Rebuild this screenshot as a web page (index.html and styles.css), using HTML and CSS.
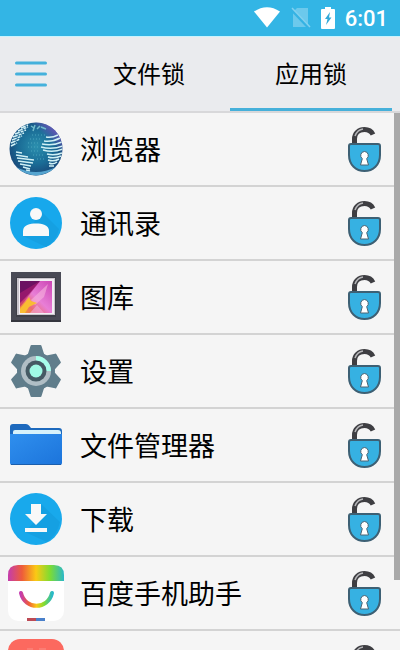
FILE: index.html
```html
<!DOCTYPE html>
<html lang="zh-CN">
<head>
  <meta charset="UTF-8" />
  <meta name="viewport" content="width=device-width, initial-scale=1" />
  <title>应用锁</title>
  <link rel="stylesheet" href="styles.css">
</head>
<body>
  <svg class="defs" aria-hidden="true">
    <symbol id="lock" viewBox="0 0 36 48">
      <path d="M8.500 19V14C8.500 8 13 4.500 18.500 4.500C22.500 4.500 25.500 6.500 27 9.500" fill="none" stroke="#3e3e42" stroke-width="5" />
      <path d="M9 11C10.500 7 13.500 4.500 17 4" fill="none" stroke="#b5b5b8" stroke-width="1.500" />
      <path d="M5 19H32Q34 19 34 21V30C34 40 27 46 18.500 46S3 40 3 30V21Q3 19 5 19Z" fill="#36b1e2" stroke="#3d6074" stroke-width="2" />
      <path d="M18.500 26.500a4 4 0 0 1 2.200 7.200L22.500 40H14.500L16.300 33.700A4 4 0 0 1 18.500 26.500Z" fill="#fff" stroke="#4b6474" />
    </symbol>
  </svg>

  <div class="status">
    <svg width="28" height="22" viewBox="0 0 28 22"><path d="M1 4.500Q14-4 27 4.500L14 20.500Z" fill="#fff" /></svg>
    <svg width="20" height="22" viewBox="0 0 20 22">
      <path d="M6 1H17V20H2V5Z" fill="#6cc9ec" />
      <path d="M0 2L18 21" stroke="#35b3e4" stroke-width="3" />
      <path d="M1 1L19 20" stroke="#82d1ef" stroke-width="1.500" />
    </svg>
    <svg width="14" height="22" viewBox="0 0 14 22">
      <path d="M4 0H10V2H13Q14 2 14 3V21Q14 22 13 22H1Q0 22 0 21V3Q0 2 1 2H4Z" fill="#fff" />
      <path d="M9 5L4 12H6.500L5 18L10.500 10.500H8Z" fill="#33a9d8" />
    </svg>
    <span class="time">6:01</span>
  </div>

  <header class="header">
    <button class="menu" aria-label="菜单">
      <svg width="34" height="28" viewBox="0 0 34 28"><path d="M2.500 3H31.500M2.500 14H31.500M2.500 25H31.500" stroke="#45b1dc" stroke-width="3" stroke-linecap="round" /></svg>
    </button>
    <button class="tab">文件锁</button>
    <button class="tab active">应用锁</button>
  </header>

  <main class="content">
    <ul class="list">
      <li class="row">
        <svg class="icon" viewBox="0 0 56 56">
          <defs>
            <radialGradient id="globe" cx=".5" cy=".45" r=".55">
              <stop offset="0" stop-color="#2b8fae" /><stop offset=".6" stop-color="#1a6c96" /><stop offset="1" stop-color="#194879" />
            </radialGradient>
            <linearGradient id="glow" x1=".5" y1=".5" x2=".9" y2=".1">
              <stop offset=".5" stop-color="#7658c4" stop-opacity="0" /><stop offset="1" stop-color="#7658c4" />
            </linearGradient>
            <clipPath id="ball"><circle cx="28" cy="28" r="26.500" /></clipPath>
          </defs>
          <circle cx="28" cy="28" r="26.500" fill="url(#globe)" />
          <circle cx="28" cy="28" r="26.500" fill="url(#glow)" />
          <g clip-path="url(#ball)" fill="none" stroke="#d0f0f5" stroke-width="1.500">
            <path d="M13 7L20 4M10 10L20 6M7 13L18 9M5 16L16 12M4 19L14 15M3 22L12 18M3 25L9 22" stroke-dasharray="5 1 3 1" />
            <path d="M8 31L14 32M8 34L20 36M9 37L26 39M10 40L25 42M12 43L23 45M15 46L22 48M18 49L22 50" />
            <path d="M38 16Q44 17 50 14M36 20Q45 21 52 17M34 23Q45 25 54 21M33 26Q44 29 55 25M35 29Q45 32 55 28M39 33Q46 35 54 32M40 36Q46 38 53 35M40 39Q46 41 51 38M41 42Q45 44 49 41M41 45L46 45" />
            <path d="M23 5L26 7M27 4L25 10M29 8L32 5M33 6L38 8" stroke="#71bacb" />
          </g>
          <path d="M24 14H37M22 18H34M20 22H31M20 26H30M23 30H31M25 34H36M29 38H37" stroke="#4ba4bd" stroke-dasharray="1 2" />
          <path d="M8 46Q28 56 48 46Q39 54 28 54.500Q17 54 8 46Z" fill="#55a4cf" />
        </svg>
        <span class="name">浏览器</span>
        <button class="lock" aria-label="锁定浏览器"><svg width="36" height="48"><use href="#lock" /></svg></button>
      </li>
      <li class="row">
        <svg class="icon" viewBox="0 0 56 56">
          <circle cx="28" cy="28" r="26" fill="#17a8ec" />
          <path d="M32 15L51 34Q48 47 38 52L15 41L27 26Z" fill="#15a0e2" />
          <circle cx="28" cy="19" r="6" fill="#f8f8f8" />
          <path d="M15 41V36C15 30 22 28.500 28 28.500S41 30 41 36V41Z" fill="#f8f8f8" />
        </svg>
        <span class="name">通讯录</span>
        <button class="lock" aria-label="锁定通讯录"><svg width="36" height="48"><use href="#lock" /></svg></button>
      </li>
      <li class="row">
        <svg class="icon" viewBox="0 0 56 56">
          <defs>
            <linearGradient id="photo" x1="0" y1="1" x2="1" y2="0">
              <stop offset="0" stop-color="#f4a31d" /><stop offset=".25" stop-color="#ec6c70" /><stop offset=".5" stop-color="#e87fd6" /><stop offset="1" stop-color="#cc45b5" />
            </linearGradient>
          </defs>
          <path d="M3 3H53V53H3Z" fill="#494a55" />
          <path d="M3 51H53V53H3Z" fill="#35363e" />
          <path d="M8 8H48V48H8Z" fill="#3e3f48" />
          <path d="M9 9H47V46H9Z" fill="#c9c5cc" />
          <path d="M11 10H46V45H11Z" fill="#f2eef3" />
          <path d="M12 12H44V44H12Z" fill="url(#photo)" />
          <path d="M12 12H32L21 25L12 34Z" fill="#6c1262" />
          <path d="M12 24L32 12L22 25L12 38Z" fill="#b01c73" opacity=".6" />
          <path d="M23 31L40 15L36 28L27 36Z" fill="#f7b4dd" opacity=".6" />
          <path d="M12 40L21 28L23 32L29 34L21 38L17 44H12Z" fill="#f9bc32" />
          <path d="M22 44L29 36L36 44Z" fill="#f0aadd" opacity=".6" />
        </svg>
        <span class="name">图库</span>
        <button class="lock" aria-label="锁定图库"><svg width="36" height="48"><use href="#lock" /></svg></button>
      </li>
      <li class="row">
        <svg class="icon" viewBox="0 0 56 56">
          <g fill="#607d8b" stroke="#607d8b" stroke-width="2" stroke-linejoin="round">
            <circle cx="28" cy="28" r="18" />
            <path id="tooth" d="M20 14L23.500 3H32.500L36 14V42L32.500 53H23.500L20 42Z" />
            <use href="#tooth" transform="rotate(60 28 28)" />
            <use href="#tooth" transform="rotate(120 28 28)" />
          </g>
          <circle cx="28" cy="28" r="15" fill="#b0bec5" />
          <path d="M28 13A15 15 0 0 1 43 28H36A8 8 0 0 0 28 20Z" fill="#a7ffeb" />
          <circle cx="28" cy="28" r="10.500" fill="#455a64" />
          <circle cx="28" cy="28" r="6.500" fill="#a0fae5" />
        </svg>
        <span class="name">设置</span>
        <button class="lock" aria-label="锁定设置"><svg width="36" height="48"><use href="#lock" /></svg></button>
      </li>
      <li class="row">
        <svg class="icon" viewBox="0 0 56 56">
          <defs>
            <linearGradient id="folder" x1="0" y1="0" x2="1" y2="1">
              <stop offset="0" stop-color="#2f8fee" /><stop offset="1" stop-color="#1c74db" />
            </linearGradient>
          </defs>
          <path d="M5 7H18Q20 7 21 8.500L23 11H51Q54 11 54 14V46H2V10Q2 7 5 7Z" fill="#1d69bd" />
          <path d="M5 20V15Q5 13 7 13H50Q53 13 53 16V20Z" fill="#d6f1fb" />
          <path d="M2 17H54V46Q54 48 52 48H4Q2 48 2 46Z" fill="url(#folder)" />
          <path d="M3 47.500H53" stroke="#1b5eac" />
        </svg>
        <span class="name">文件管理器</span>
        <button class="lock" aria-label="锁定文件管理器"><svg width="36" height="48"><use href="#lock" /></svg></button>
      </li>
      <li class="row">
        <svg class="icon" viewBox="0 0 56 56">
          <circle cx="28" cy="28" r="26" fill="#18a9ec" />
          <path d="M33 13L52 31Q49 44 39 51L17 41L28 29Z" fill="#15a0e2" />
          <path d="M23 13H33V23H39L28 34L17 23H23Z" fill="#f8f8f8" />
          <path d="M17 37H39V41H17Z" fill="#f8f8f8" />
        </svg>
        <span class="name">下载</span>
        <button class="lock" aria-label="锁定下载"><svg width="36" height="48"><use href="#lock" /></svg></button>
      </li>
      <li class="row">
        <svg class="icon" viewBox="0 0 56 56">
          <defs>
            <linearGradient id="rainbow">
              <stop offset="0" stop-color="#c43cae" /><stop offset=".25" stop-color="#ee5c3a" /><stop offset=".5" stop-color="#fbc914" /><stop offset=".75" stop-color="#7edc32" /><stop offset="1" stop-color="#29b8c8" />
            </linearGradient>
          </defs>
          <rect width="56" height="56" rx="10" fill="#fff" />
          <path d="M0 16V10Q0 0 10 0H46Q56 0 56 10V16Z" fill="url(#rainbow)" />
          <path d="M13 28C17 45 40 45 44 28" fill="none" stroke="url(#rainbow)" stroke-width="4" stroke-linecap="round" />
          <path d="M19 53H28V56H19Z" fill="#bd4a55" />
          <path d="M28 53H37V56H28Z" fill="#4a80ca" />
        </svg>
        <span class="name">百度手机助手</span>
        <button class="lock" aria-label="锁定百度手机助手"><svg width="36" height="48"><use href="#lock" /></svg></button>
      </li>
      <li class="row">
        <svg class="icon" viewBox="0 0 56 56">
          <rect width="56" height="56" rx="12" fill="#fc695f" />
          <path d="M19 10H25M31 10H38" stroke="#fa9188" />
        </svg>
        <span class="name"></span>
        <button class="lock" aria-label="锁定"><svg width="36" height="48"><use href="#lock" /></svg></button>
      </li>
    </ul>
    <div class="scrollbar"></div>
  </main>
</body>
</html>
```

FILE: styles.css
```css
* {
  box-sizing: border-box;
}
body {
  margin: 0;
  height: 100vh;
  display: flex;
  flex-direction: column;
  overflow: hidden;
  background: #f5f5f5;
  color: #000;
  font-family: "Noto Sans CJK SC", sans-serif;
}
button {
  padding: 0;
  border: none;
  background: none;
  color: inherit;
  font-family: inherit;
  cursor: pointer;
}
svg {
  display: block;
}
.defs {
  position: absolute;
  width: 0;
  height: 0;
}
.status {
  flex: none;
  height: 36px;
  padding: 0 12px;
  display: flex;
  align-items: center;
  justify-content: flex-end;
  gap: 10px;
  background: #33b5e5;
}
.time {
  padding-top: 2px;
  color: #fff;
  font: 500 22px/24px Roboto, sans-serif;
}
.header {
  flex: none;
  height: 77px;
  padding-right: 8px;
  display: flex;
  background: #eaebee;
  border-top: 1px solid #c9f3fd;
  border-bottom: 2px solid #d8d8da;
}
.menu {
  width: 68px;
  padding-left: 14px;
}
.tab {
  flex: 1;
  border-bottom: 3px solid transparent;
  font-size: 24px;
}
.tab.active {
  border-bottom-color: #46b0da;
}
.content {
  flex: 1;
  min-height: 0;
  position: relative;
  overflow: hidden;
}
.list {
  margin: 0;
  padding: 0;
  list-style: none;
}
.row {
  height: 74px;
  padding: 0 18px 0 8px;
  display: flex;
  align-items: center;
  border-bottom: 2px solid #d3d3d3;
}
.icon {
  flex: none;
  width: 56px;
  height: 56px;
}
.name {
  flex: 1;
  margin-left: 16px;
  font-size: 27px;
  line-height: 40px;
}
.scrollbar {
  position: absolute;
  top: 0;
  right: 0;
  width: 6px;
  height: 87%;
  background: #a9a9a9;
}
```
